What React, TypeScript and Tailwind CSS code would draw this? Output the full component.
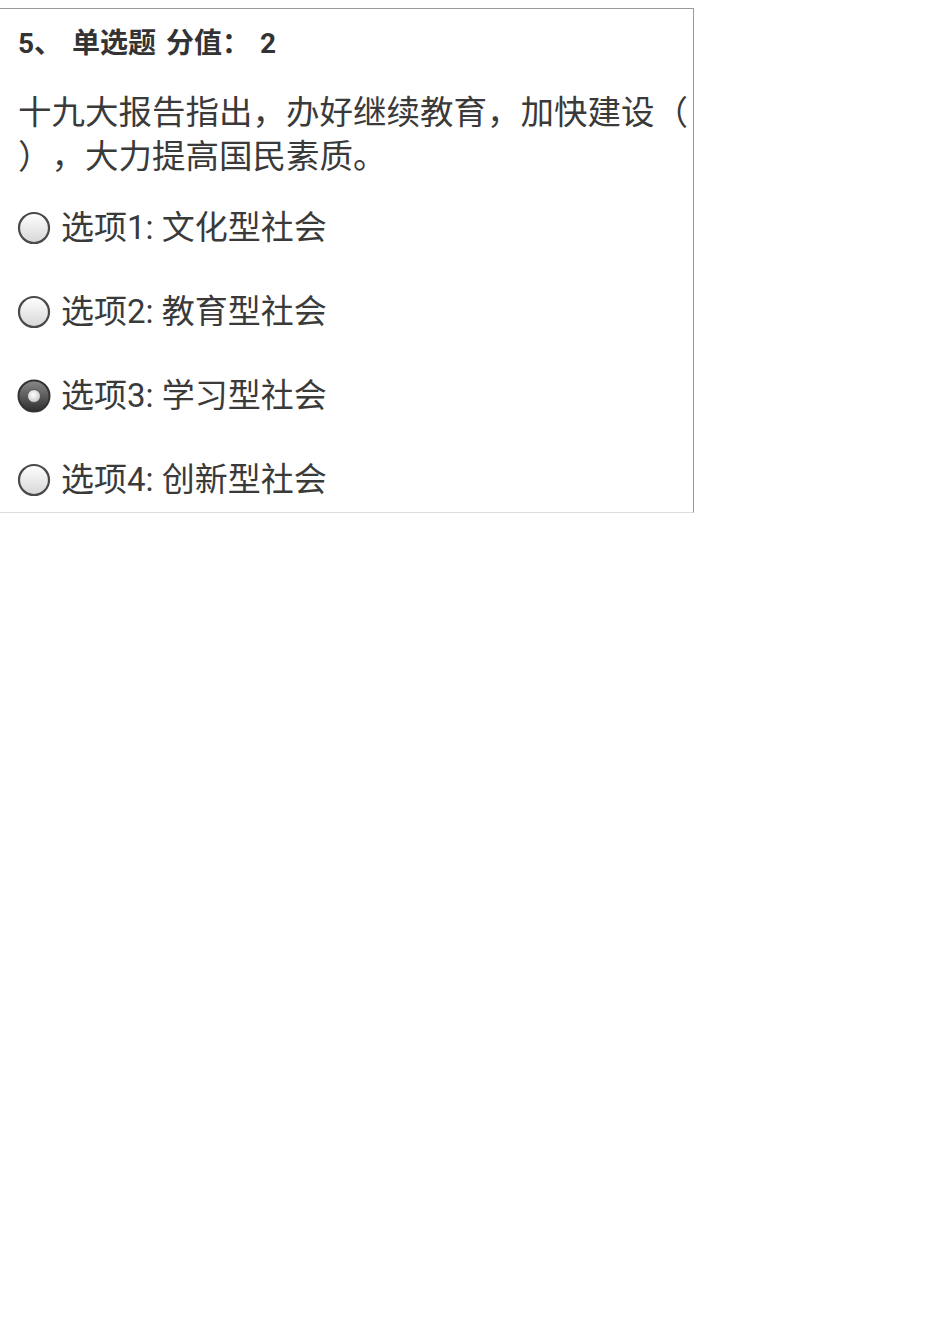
const options = [
  { label: '选项1:', text: '文化型社会', checked: false },
  { label: '选项2:', text: '教育型社会', checked: false },
  { label: '选项3:', text: '学习型社会', checked: true },
  { label: '选项4:', text: '创新型社会', checked: false },
];

function Radio({ checked }: { checked: boolean }) {
  return (
    <svg width="34" height="34" viewBox="0 0 34 34" className="shrink-0">
      <defs>
        <linearGradient id="off" x1="0" y1="0" x2="0" y2="1">
          <stop offset="0" stopColor="#ffffff" />
          <stop offset="1" stopColor="#d6d6d6" />
        </linearGradient>
        <linearGradient id="on" x1="0" y1="0" x2="0" y2="1">
          <stop offset="0" stopColor="#8a8a8a" />
          <stop offset="1" stopColor="#2e2e2e" />
        </linearGradient>
        <radialGradient id="dot" cx="0.45" cy="0.4" r="0.6">
          <stop offset="0" stopColor="#ffffff" />
          <stop offset="1" stopColor="#c8c8c8" />
        </radialGradient>
      </defs>
      {checked ? (
        <>
          <circle cx="17" cy="17" r="15.5" fill="url(#on)" stroke="#333" strokeWidth="2" />
          <circle cx="17" cy="17" r="6.5" fill="url(#dot)" stroke="#555" strokeWidth="1" />
        </>
      ) : (
        <circle cx="17" cy="17" r="15" fill="url(#off)" stroke="#4a4a4a" strokeWidth="2.2" />
      )}
    </svg>
  );
}

export default function App() {
  return (
    <div className="min-h-[1344px] bg-white pt-2 font-['Roboto','Noto_Sans_CJK_SC',sans-serif] text-[#333] [text-spacing-trim:space-all]">
      <div className="w-[694px] border-t border-r border-b border-t-[#9a9a9a] border-r-[#9a9a9a] border-b-[#dddddd] pb-3 pl-[18px]">
        <div className="pt-[17px] text-[28px] font-bold leading-[36px] text-[#333] [word-spacing:3px]">
          5、 单选题 分值： 2
        </div>

        <div className="mt-[29px] pr-1 text-[33.5px] leading-[44px] text-[#3a3a3a]">
          十九大报告指出，办好继续教育，加快建设（ ），大力提高国民素质。
        </div>

        <div className="mt-[29px] flex flex-col gap-[44px]">
          {options.map((o) => (
            <label key={o.label} className="flex h-[40px] items-center gap-[10px] -ml-[1px]">
              <Radio checked={o.checked} />
              <span className="text-[33px] leading-[40px] text-[#3a3a3a]">
                {o.label} {o.text}
              </span>
            </label>
          ))}
        </div>
      </div>
    </div>
  );
}
